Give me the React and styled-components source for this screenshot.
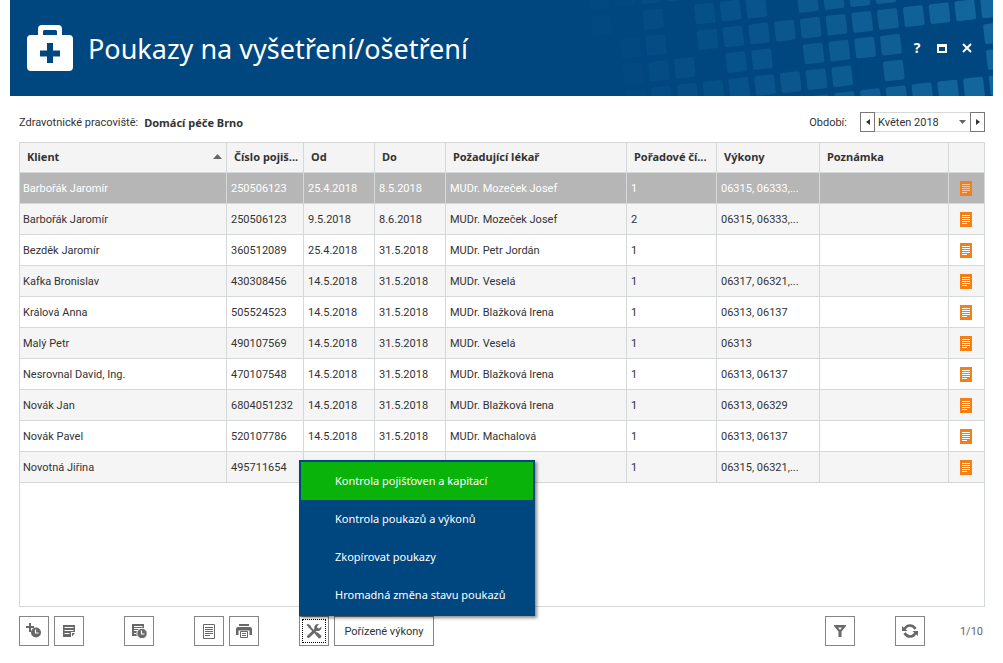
import React from "react";
import styled, { createGlobalStyle, css } from "styled-components";

const navy = "#00467f";
const line = "#d5d8d8";
const ink = "#333";
const iconGray = "#686868";
const humanist = `"Noto Sans", "Open Sans", sans-serif`;

const GlobalStyle = createGlobalStyle`
  * { box-sizing: border-box; }
  body {
    margin: 0;
    background: #fff;
    color: ${ink};
    font-family: Roboto, "Noto Sans", sans-serif;
    font-size: 11px;
    line-height: 16px;
  }
  button, select { font: inherit; color: inherit; }
`;

const Page = styled.div`
  display: flex;
  flex-direction: column;
  min-height: 100vh;
  padding: 0 10px 17px;
`;

const Header = styled.header`
  position: relative;
  display: flex;
  align-items: center;
  height: 96px;
  padding: 0 18px 0 16px;
  background: ${navy};
  color: #fff;
  overflow: hidden;
`;

const Pattern = styled.svg`
  position: absolute;
  top: 0;
  right: 0;
`;

const Title = styled.h1`
  flex: 1;
  margin: 0 0 0 14px;
  padding-top: 2px;
  font-family: ${humanist};
  font-size: 27px;
  line-height: 40px;
  font-weight: 400;
  white-space: nowrap;
`;

const WindowControls = styled.div`
  position: relative;
  display: flex;
  gap: 9px;
`;

const WindowButton = styled.button`
  display: grid;
  place-items: center;
  width: 16px;
  height: 16px;
  padding: 0;
  border: 0;
  background: none;
  color: #fff;
  font-family: ${humanist};
  font-size: 14px;
  font-weight: 700;
`;

const Content = styled.main`
  flex: 1;
  display: flex;
  flex-direction: column;
  padding: 16px 8px 0 9px;
`;

const InfoBar = styled.div`
  display: flex;
  justify-content: space-between;
  align-items: center;
  height: 20px;
  margin-bottom: 10px;
`;

const Workplace = styled.div`
  display: flex;
  align-items: center;
  gap: 6px;
  padding-top: 2px;
`;

const Strong = styled.strong`
  font-family: ${humanist};
`;

const Period = styled.div`
  display: flex;
  align-items: center;
  height: 20px;
`;

const PeriodLabel = styled.label`
  margin-right: 13px;
  padding-top: 2px;
`;

const StepButton = styled.button`
  display: grid;
  place-items: center;
  width: 15px;
  height: 20px;
  padding: 0;
  border: 1px solid #777;
  background: #fff;
`;

const SelectBox = styled.div`
  display: grid;
  align-items: center;
  width: 95px;
  height: 20px;
  border: solid ${line};
  border-width: 1px 0;

  > * { grid-area: 1 / 1; }
  > svg { justify-self: end; margin-right: 4px; pointer-events: none; }
`;

const PeriodSelect = styled.select`
  width: 100%;
  height: 18px;
  padding: 2px 0 0 3px;
  border: 0;
  background: transparent;
  appearance: none;
`;

const Grid = styled.section`
  flex: 1;
  border: 1px solid ${line};
`;

const Table = styled.table`
  width: 100%;
  table-layout: fixed;
  border-collapse: separate;
  border-spacing: 0;
`;

const cell = css`
  overflow: hidden;
  text-overflow: ellipsis;
  white-space: nowrap;
  text-align: left;
  border-right: 1px solid ${line};
  border-bottom: 1px solid ${line};
  &:last-child { border-right: 0; }
`;

const HeadCell = styled.th`
  ${cell}
  height: 30px;
  padding: 0 2px 2px 7px;
  background: #f4f4f4;
  font-family: ${humanist};
  font-weight: 700;
`;

const SortLabel = styled.span`
  display: flex;
  align-items: center;
  justify-content: space-between;
  padding-right: 2px;
`;

const Cell = styled.td`
  ${cell}
  height: 31px;
  padding: 2px 4px 0;
  &:first-child { padding-left: 3px; }
`;

const IconCell = styled(Cell)`
  padding: 0 2px 0 0;
  svg { display: block; margin: 0 auto; }
`;

const Row = styled.tr`
  background: ${(p) => (p.$selected ? "#b6b6b6" : "#fff")};
  color: ${(p) => (p.$selected ? "#fff" : ink)};
  &:nth-child(even) { background: #f5f5f5; }
`;

const Toolbar = styled.footer`
  display: flex;
  align-items: center;
  padding: 9px 10px 0 9px;
`;

const ToolGroup = styled.div`
  position: relative;
  display: flex;
  gap: 5px;
  margin-right: ${(p) => p.$after || 0}px;
`;

const ToolButton = styled.button`
  display: grid;
  place-items: center;
  width: ${(p) => (p.$wide ? "100px" : "30px")};
  height: 30px;
  padding: ${(p) => (p.$wide ? "2px 0 0" : "0")};
  border: 1px solid #858585;
  background: #fff;
  ${(p) => p.$focused && css`
    outline: 1px dotted #000;
    outline-offset: -4px;
  `}
`;

const Spacer = styled.div`
  flex: 1;
`;

const Counter = styled.span`
  width: 28px;
  padding-top: 2px;
  color: #666;
  text-align: right;
`;

const Menu = styled.div`
  position: absolute;
  left: 0;
  bottom: 100%;
  width: 236px;
  border: 2px solid ${navy};
  background: ${navy};
  box-shadow: 2px 2px 3px rgba(0, 0, 0, 0.45);
`;

const MenuItem = styled.button`
  display: block;
  width: 100%;
  height: 38px;
  padding: 0 0 0 34px;
  border: 0;
  background: ${(p) => (p.$active ? "#0ab30a" : "transparent")};
  color: #fff;
  font-family: ${humanist};
  font-size: 11px;
  text-align: left;
  white-space: nowrap;
`;

/* Columns filled in each row of the header mosaic; column 0 sits near the window controls. */
const mosaic = [
  [-2, [-11, -10, -9, -8, -7]],
  [-1, [-11, -9, -7, -6, -5, -3, -2, -1, 0]],
  [0, [-10, -9, -7, -6, -5, -4, -3, -2, -1, 0, 1, 2, 3, 4]],
  [1, [-10, -9, -8, -6, -5, -3, -2, -1, 0, 4]],
  [2, [-10, -9, -8, -7, -6, -5, -4, -3, -2, 0, 4]],
  [3, [-3, -2, -1, 0, 1, 2, 3, 4]],
];

const Mosaic = () => (
  <Pattern width="433" height="96" viewBox="0 0 433 96" aria-hidden="true">
    <g transform="translate(328 19) rotate(-6.4)" fill="#1b74a8">
      {mosaic.flatMap(([r, cols]) =>
        cols.map((c) => (
          <rect
            key={`${r}:${c}`}
            x={c * 25.93 - 10}
            y={r * 25.93 - 10}
            width="20"
            height="20"
            rx="2"
            opacity={Math.max(0.06, Math.min(0.7, 0.55 + c * 0.046))}
          />
        ))
      )}
    </g>
  </Pattern>
);

const MedkitIcon = () => (
  <svg width="48" height="48" viewBox="0 0 48 48" aria-hidden="true">
    <path fill="#fff" fillRule="evenodd" d="M12 11V5q0-4 4-4h16q4 0 4 4v6h7q4 0 4 4v28q0 4-4 4H5q-4 0-4-4V15q0-4 4-4zM17 11h14V7.500q0-1.500-1.500-1.500h-11q-1.500 0-1.500 1.500zM21 19v7.500h-7v6h7V39h6v-6.500h7v-6h-7V19z" />
  </svg>
);

const Triangle = ({ w, h, points, fill = "#333" }) => (
  <svg width={w} height={h} viewBox={`0 0 ${w} ${h}`} aria-hidden="true">
    <polygon points={points} fill={fill} />
  </svg>
);

const NoteIcon = ({ muted }) => (
  <svg width="12" height="15" viewBox="0 0 12 15" aria-hidden="true">
    <path fill="#f57f17" d="M0 0h12v15H0z" />
    <path stroke={muted ? "#f8c9a0" : "#fff"} d="M2 3.500h8M2 5.500h8M2 7.500h8M2 9.500h8M2 11.500h5" />
  </svg>
);

const Icon = ({ children }) => (
  <svg width="20" height="20" viewBox="0 0 20 20" fill={iconGray} aria-hidden="true">
    {children}
  </svg>
);

const AddClockIcon = () => (
  <Icon>
    <path d="M5 2h2v3h3v2H7v4H5V7H2V5h3z" />
    <circle cx="12" cy="11.500" r="5" />
    <path d="M11.500 8.500v3.500h3" fill="none" stroke="#fff" strokeWidth="1.200" />
  </Icon>
);

const MemoIcon = () => (
  <Icon>
    <path d="M4 4h12v7h-4v5H4z" />
    <path d="M13 12h3l-3 3.500z" />
    <path d="M5.500 6.500h9M5.500 9.500h9M5.500 12.500h5" stroke="#fff" />
  </Icon>
);

const ListClockIcon = () => (
  <Icon>
    <path d="M3 3h12v5H3zM3 3h7v12H3z" />
    <path d="M5 5.500h8.500M5 7.500h8.500M5 9.500h4M5 12.500h2" stroke="#fff" />
    <circle cx="13" cy="12.500" r="5.200" stroke="#fff" />
    <path d="M12.500 9.500v3.500h3" fill="none" stroke="#fff" strokeWidth="1.200" />
  </Icon>
);

const DocumentIcon = () => (
  <Icon>
    <path d="M4.500 3.500h11v14h-11zM6 6.500h8M6 8.500h8M6 10.500h8M6 12.500h8M6 14.500h5" fill="none" stroke={iconGray} />
  </Icon>
);

const PrinterIcon = () => (
  <Icon>
    <path d="M5 3h10v2H5zM4 6h12q2 0 2 2v6h-2.500V9.500h-11V14H2V8q0-2 2-2z" />
    <path d="M6.500 10.500h7v6h-7zM8 12.500h4M8 14.500h4" fill="none" stroke={iconGray} />
  </Icon>
);

const ToolsIcon = () => (
  <Icon>
    <path d="M5 5.500l7 7" fill="none" stroke={iconGray} strokeWidth="1.800" />
    <path d="M2.500 4l1.500-1.200 2.800 1.900-.2 1.500-1.500.4zM11 13l1.800-2 4.700 3.800q-.3 2.700-2.500 2.700z" />
    <path d="M4.500 15.500L12 8.500" fill="none" stroke={iconGray} strokeWidth="3" strokeLinecap="round" />
    <path d="M15 3l-2 2.400.4 1.700 1.800.4L17.500 5.500q.1 4.300-3.800 4.500-4-.4-3.400-4Q11 2.500 15 3z" />
  </Icon>
);

const FilterIcon = () => (
  <Icon>
    <path fillRule="evenodd" d="M4 4h12v1l-4.500 5.500V16h-3v-5.500L4 5zM8 6.500l2 2.500 2-2.500z" />
  </Icon>
);

const RefreshIcon = () => (
  <Icon>
    <path d="M4.500 8.500Q6 4.500 10 4.500q3.500 0 5.500 3.500M15.500 11.500q-1.500 4-5.500 4-3.500 0-5.500-3.500" fill="none" stroke={iconGray} strokeWidth="2.600" />
    <path d="M2 5v5h5.500zM18 15v-5h-5.500z" />
  </Icon>
);

const columns = [
  { label: "Klient", width: 207, sorted: true },
  { label: "Číslo pojiš...", width: 77 },
  { label: "Od", width: 71 },
  { label: "Do", width: 71 },
  { label: "Požadující lékař", width: 181 },
  { label: "Pořadové čí...", width: 90 },
  { label: "Výkony", width: 103 },
  { label: "Poznámka", width: 129 },
  { label: "", width: 35 },
];

const rows = [
  ["Barbořák Jaromír", "250506123", "25.4.2018", "8.5.2018", "MUDr. Mozeček Josef", "1", "06315, 06333,...", ""],
  ["Barbořák Jaromír", "250506123", "9.5.2018", "8.6.2018", "MUDr. Mozeček Josef", "2", "06315, 06333,...", ""],
  ["Bezděk Jaromír", "360512089", "25.4.2018", "31.5.2018", "MUDr. Petr Jordán", "1", "", ""],
  ["Kafka Bronislav", "430308456", "14.5.2018", "31.5.2018", "MUDr. Veselá", "1", "06317, 06321,...", ""],
  ["Králová Anna", "505524523", "14.5.2018", "31.5.2018", "MUDr. Blažková Irena", "1", "06313, 06137", ""],
  ["Malý Petr", "490107569", "14.5.2018", "31.5.2018", "MUDr. Veselá", "1", "06313", ""],
  ["Nesrovnal David, Ing.", "470107548", "14.5.2018", "31.5.2018", "MUDr. Blažková Irena", "1", "06313, 06137", ""],
  ["Novák Jan", "6804051232", "14.5.2018", "31.5.2018", "MUDr. Blažková Irena", "1", "06313, 06329", ""],
  ["Novák Pavel", "520107786", "14.5.2018", "31.5.2018", "MUDr. Machalová", "1", "06313, 06137", ""],
  ["Novotná Jiřina", "495711654", "", "", "", "1", "06315, 06321,...", ""],
];

const menuItems = [
  "Kontrola pojišťoven a kapitací",
  "Kontrola poukazů a výkonů",
  "Zkopírovat poukazy",
  "Hromadná změna stavu poukazů",
];

export default function App() {
  return (
    <Page>
      <GlobalStyle />
      <Header>
        <Mosaic />
        <MedkitIcon />
        <Title>Poukazy na vyšetření/ošetření</Title>
        <WindowControls>
          <WindowButton aria-label="Nápověda">?</WindowButton>
          <WindowButton aria-label="Maximalizovat">
            <svg width="10" height="9" viewBox="0 0 10 9" aria-hidden="true">
              <path fill="#fff" fillRule="evenodd" d="M0 0h10v9H0zM2 3v4h6V3z" />
            </svg>
          </WindowButton>
          <WindowButton aria-label="Zavřít">
            <svg width="10" height="10" viewBox="0 0 10 10" aria-hidden="true">
              <path d="M1 1l8 8M9 1l-8 8" stroke="#fff" strokeWidth="2" />
            </svg>
          </WindowButton>
        </WindowControls>
      </Header>

      <Content>
        <InfoBar>
          <Workplace>
            <span>Zdravotnické pracoviště:</span>
            <Strong>Domácí péče Brno</Strong>
          </Workplace>
          <Period>
            <PeriodLabel htmlFor="period">Období:</PeriodLabel>
            <StepButton aria-label="Předchozí období">
              <Triangle w={4} h={6} points="4,0 4,6 0,3" />
            </StepButton>
            <SelectBox>
              <PeriodSelect id="period" defaultValue="2018-05">
                <option value="2018-05">Květen 2018</option>
              </PeriodSelect>
              <Triangle w={7} h={4} points="0,0 7,0 3.500,4" fill="#666" />
            </SelectBox>
            <StepButton aria-label="Další období">
              <Triangle w={4} h={6} points="0,0 4,3 0,6" />
            </StepButton>
          </Period>
        </InfoBar>

        <Grid>
          <Table>
            <colgroup>
              {columns.map((c, i) => (
                <col key={i} width={c.width} />
              ))}
            </colgroup>
            <thead>
              <tr>
                {columns.map((c, i) => (
                  <HeadCell key={i} scope="col">
                    {c.sorted ? (
                      <SortLabel>
                        {c.label}
                        <Triangle w={9} h={5} points="0,5 4.500,0 9,5" fill="#666" />
                      </SortLabel>
                    ) : (
                      c.label
                    )}
                  </HeadCell>
                ))}
              </tr>
            </thead>
            <tbody>
              {rows.map((row, i) => (
                <Row key={i} $selected={i === 0}>
                  {row.map((value, j) => (
                    <Cell key={j}>{value}</Cell>
                  ))}
                  <IconCell>
                    <NoteIcon muted={i === 0} />
                  </IconCell>
                </Row>
              ))}
            </tbody>
          </Table>
        </Grid>
      </Content>

      <Toolbar>
        <ToolGroup $after={40}>
          <ToolButton aria-label="Nový poukaz"><AddClockIcon /></ToolButton>
          <ToolButton aria-label="Upravit"><MemoIcon /></ToolButton>
        </ToolGroup>
        <ToolGroup $after={40}>
          <ToolButton aria-label="Historie"><ListClockIcon /></ToolButton>
        </ToolGroup>
        <ToolGroup $after={40}>
          <ToolButton aria-label="Náhled"><DocumentIcon /></ToolButton>
          <ToolButton aria-label="Tisk"><PrinterIcon /></ToolButton>
        </ToolGroup>
        <ToolGroup>
          <ToolButton aria-label="Nástroje" $focused><ToolsIcon /></ToolButton>
          <ToolButton $wide>Pořízené výkony</ToolButton>
          <Menu role="menu">
            {menuItems.map((label, i) => (
              <MenuItem key={label} role="menuitem" $active={i === 0}>{label}</MenuItem>
            ))}
          </Menu>
        </ToolGroup>
        <Spacer />
        <ToolGroup $after={40}>
          <ToolButton aria-label="Filtr"><FilterIcon /></ToolButton>
        </ToolGroup>
        <ToolGroup $after={30}>
          <ToolButton aria-label="Obnovit"><RefreshIcon /></ToolButton>
        </ToolGroup>
        <Counter>1/10</Counter>
      </Toolbar>
    </Page>
  );
}
